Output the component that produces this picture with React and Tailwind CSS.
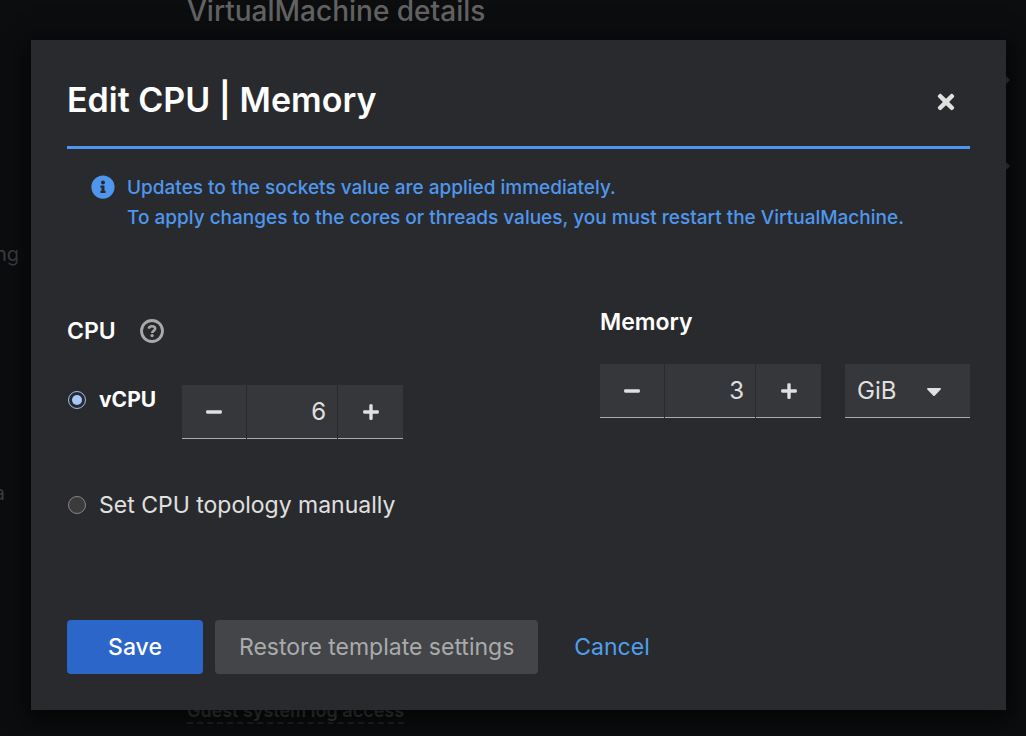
import { useState } from 'react';
import { FaCaretDown, FaInfoCircle, FaMinus, FaPlus, FaTimes } from 'react-icons/fa';

const stepClass =
  'flex h-[54px] items-center justify-center border-b border-[#aaabac] bg-[#36373a] text-[#e0e0e0]';

function HelpIcon() {
  return (
    <svg viewBox="0 0 24 24" className="size-6" fill="none" stroke="currentColor">
      <circle cx="12" cy="12" r="10.5" strokeWidth="2.8" />
      <path
        d="M8.6 9.6 C9.2 8 10.4 7.3 12 7.3 C13.9 7.3 15.2 8.3 15.2 9.8 C15.2 11.7 12.2 11.8 12.2 14"
        strokeWidth="2.5"
      />
      <circle cx="12.1" cy="16.6" r="1.6" fill="currentColor" stroke="none" />
    </svg>
  );
}

function NumberStepper({ label, value, onChange }) {
  return (
    <div className="flex gap-px">
      <button
        type="button"
        aria-label={`Decrease ${label}`}
        onClick={() => onChange(Math.max(1, value - 1))}
        className={`${stepClass} w-16`}
      >
        <FaMinus size={18} />
      </button>
      <input
        type="text"
        inputMode="numeric"
        aria-label={label}
        value={value}
        onChange={(e) => onChange(Number(e.target.value) || 1)}
        className={`${stepClass} w-[90px] rounded-none pr-[11px] text-right text-2xl outline-none`}
      />
      <button
        type="button"
        aria-label={`Increase ${label}`}
        onClick={() => onChange(value + 1)}
        className={`${stepClass} w-[65px]`}
      >
        <FaPlus size={18} />
      </button>
    </div>
  );
}

function Radio({ id, checked, onChange }) {
  return (
    <input
      type="radio"
      id={id}
      name="cpu-mode"
      checked={checked}
      onChange={onChange}
      className="mx-px size-[18px] shrink-0 appearance-none rounded-full border border-[#858585] bg-[#3b3b3b] checked:border-[#99c0f5] checked:bg-[#a8c8fa] checked:bg-clip-content checked:p-[3px]"
    />
  );
}

function PageBehind() {
  return (
    <div
      aria-hidden="true"
      className="absolute inset-0 flex justify-between overflow-hidden bg-[#0c0d0f] text-[#3d3d3f]"
    >
      <div className="flex w-[19px] flex-col items-end pt-[239px] text-xl leading-[30px]">
        <span>ng</span>
        <span className="mr-[14px] mt-[209px]">a</span>
      </div>
      <div className="ml-[168px] flex flex-1 flex-col items-start justify-between pb-3">
        <p className="-mt-2 text-[28px] font-medium leading-[38px] text-[#626262]">
          VirtualMachine details
        </p>
        <p className="border-b-2 border-dashed border-[#232325] text-lg font-semibold leading-[23px]">
          Guest system log access
        </p>
      </div>
      <div className="flex w-[22px] flex-col gap-[70px] pt-[72px]">
        <svg viewBox="0 0 8 16" className="h-4 w-2" fill="currentColor">
          <path d="M0 4 L2 4 L6 8 L2 12 L0 12 Z" />
        </svg>
        <svg viewBox="0 0 8 16" className="h-4 w-2" fill="currentColor">
          <path d="M0 4 L2 4 L6 8 L2 12 L0 12 Z" />
        </svg>
      </div>
    </div>
  );
}

export default function App() {
  const [vcpu, setVcpu] = useState(6);
  const [memory, setMemory] = useState(3);
  const [mode, setMode] = useState('vcpu');
  const [unit, setUnit] = useState('GiB');

  return (
    <div className="relative min-h-screen bg-[#0c0d0f] pb-[26px] pl-[31px] pr-5 pt-10 font-['Inter','Liberation_Sans',sans-serif]">
      <PageBehind />
      <div
        role="dialog"
        aria-modal="true"
        aria-labelledby="dialog-title"
        className="relative bg-[#292a2d] px-9 pb-9 pt-9 text-[23px] text-[#e0e0e0] shadow-[0_6px_24px_4px_rgba(0,0,0,0.7)]"
      >
        <header className="flex items-center justify-between border-b-[3px] border-[#4f97ee] pb-[22px]">
          <h1 id="dialog-title" className="text-[34px] font-semibold leading-[48px] text-white">
            Edit CPU | Memory
          </h1>
          <button type="button" aria-label="Close" className="mr-3 mt-1 flex size-6 items-center justify-center">
            <FaTimes size={24} />
          </button>
        </header>

        <div role="status" className="flex gap-3 px-6 pt-6 text-[19px] font-medium leading-[30px] text-[#4f97ee]">
          <FaInfoCircle size={24} className="mt-[2px] shrink-0" />
          <p>
            Updates to the sockets value are applied immediately.
            <br />
            To apply changes to the cores or threads values, you must restart the VirtualMachine.
          </p>
        </div>

        <form className="pt-[71px]" onSubmit={(e) => e.preventDefault()}>
          <div className="flex items-start justify-between">
            <div role="radiogroup" aria-labelledby="cpu-heading" className="pt-[9px]">
              <div className="flex items-center gap-6">
                <h2 id="cpu-heading" className="font-semibold leading-9 text-white">
                  CPU
                </h2>
                <button type="button" aria-label="About CPU" className="text-[#a9a9aa]">
                  <HelpIcon />
                </button>
              </div>
              <div className="flex items-start pt-9">
                <div className="flex items-center gap-3 pr-[26px]">
                  <Radio id="mode-vcpu" checked={mode === 'vcpu'} onChange={() => setMode('vcpu')} />
                  <label htmlFor="mode-vcpu" className="text-[21px] font-bold leading-[30px] text-white">
                    vCPU
                  </label>
                </div>
                <NumberStepper label="vCPU count" value={vcpu} onChange={setVcpu} />
              </div>
              <div className="flex items-center gap-3 pt-12">
                <Radio id="mode-manual" checked={mode === 'manual'} onChange={() => setMode('manual')} />
                <label htmlFor="mode-manual" className="leading-9">
                  Set CPU topology manually
                </label>
              </div>
            </div>

            <div>
              <h2 className="font-semibold leading-9 text-white">Memory</h2>
              <div className="flex gap-6 pt-6">
                <NumberStepper label="Memory size" value={memory} onChange={setMemory} />
                <div className="grid w-[125px] items-center">
                  <select
                    aria-label="Memory unit"
                    value={unit}
                    onChange={(e) => setUnit(e.target.value)}
                    className="col-start-1 row-start-1 h-[54px] w-full appearance-none border-b border-[#aaabac] bg-[#36373a] pl-3 text-2xl outline-none"
                  >
                    <option>MiB</option>
                    <option>GiB</option>
                    <option>TiB</option>
                  </select>
                  <FaCaretDown
                    size={24}
                    className="pointer-events-none col-start-1 row-start-1 mr-6 justify-self-end"
                  />
                </div>
              </div>
            </div>
          </div>

          <footer className="flex gap-3 pt-[97px]">
            <button type="submit" className="h-[54px] w-[136px] rounded bg-[#2b66c8] font-medium text-white">
              Save
            </button>
            <button type="button" disabled className="h-[54px] rounded bg-[#444548] px-6 text-[#aaabac]">
              Restore template settings
            </button>
            <button type="button" className="h-[54px] px-6 text-[#4f9fee]">
              Cancel
            </button>
          </footer>
        </form>
      </div>
    </div>
  );
}
